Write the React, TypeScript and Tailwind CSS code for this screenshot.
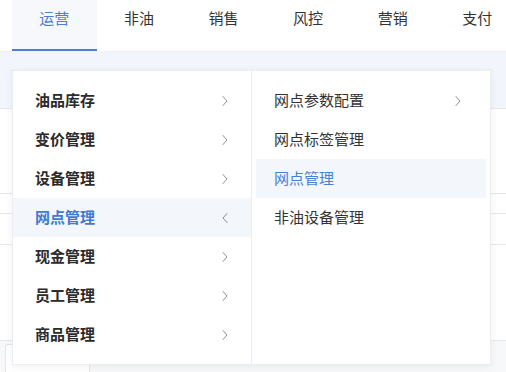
import React from "react";

const tabs = ["运营", "非油", "销售", "风控", "营销", "支付"];

const leftItems = [
  "油品库存",
  "变价管理",
  "设备管理",
  "网点管理",
  "现金管理",
  "员工管理",
  "商品管理",
];

const rightItems = [
  { label: "网点参数配置", arrow: true },
  { label: "网点标签管理", arrow: false },
  { label: "网点管理", arrow: false, active: true },
  { label: "非油设备管理", arrow: false },
];

function Chevron({ left = false }: { left?: boolean }) {
  return (
    <svg width="8" height="12" viewBox="0 0 8 12" fill="none">
      <polyline
        points={left ? "6,1.5 2,6 6,10.5" : "2,1.5 6,6 2,10.5"}
        stroke="#8a8f99"
        strokeWidth="1"
        strokeLinecap="round"
        strokeLinejoin="round"
      />
    </svg>
  );
}

export default function App() {
  return (
    <div
      className="relative h-[372px] w-[506px] overflow-hidden bg-white text-[#333]"
      style={{ fontFamily: '"Noto Sans CJK SC", "Noto Sans", sans-serif' }}
    >
      {/* top nav */}
      <div className="flex h-[52px] border-b border-[#eef1f6] bg-white pl-3">
        {tabs.map((t, i) => (
          <div
            key={t}
            className={
              i === 0
                ? "flex h-full w-[84.6px] shrink-0 items-start justify-center border-b-2 border-[#4a7fd3] bg-[#f6f8fc] pt-[7px] text-[15px] text-[#4a7fd3]"
                : "flex h-full w-[84.6px] shrink-0 items-start justify-center pt-[7px] text-[15px] text-[#333]"
            }
          >
            {t}
          </div>
        ))}
      </div>

      {/* page behind */}
      <div className="h-[56px] bg-[#f2f5fb]" />
      <div className="border-t border-[#e4e7ec] bg-white">
        <div className="h-[84px]" />
        <div className="h-[20px] border-t border-[#e6e8ec]" />
        <div className="h-[31px] border-t border-[#e6e8ec]" />
        <div className="h-[96px] border-t border-[#e6e8ec]" />
        <div className="flex h-[40px] border-t border-[#e6e8ec] bg-[#f7f8fa]">
          <div className="ml-[5px] mt-[3px] h-[40px] w-[85px] rounded-t-[3px] border border-[#e2e4e8] bg-white" />
        </div>
      </div>

      {/* dropdown */}
      <div className="absolute left-[12px] top-[70px] flex h-[295px] w-[479px] border border-[#ebedf0] bg-white shadow-[0_2px_8px_rgba(0,0,0,0.06)]">
        <div className="w-[239px] border-r border-[#ebedf0] py-[10px]">
          {leftItems.map((t, i) => {
            const active = i === 3;
            return (
              <div
                key={t}
                className={
                  active
                    ? "flex h-[39px] items-center justify-between bg-[#f3f6fb] pl-[22px] pr-[22px] text-[15px] font-bold text-[#3f7bd5]"
                    : "flex h-[39px] items-center justify-between pl-[22px] pr-[22px] text-[15px] font-bold text-[#2b2b2b]"
                }
              >
                <span>{t}</span>
                <Chevron left={active} />
              </div>
            );
          })}
        </div>
        <div className="flex-1 px-[4px] py-[10px]">
          {rightItems.map((it) => (
            <div
              key={it.label}
              className={
                it.active
                  ? "flex h-[39px] items-center justify-between bg-[#f3f6fb] pl-[18px] pr-[24px] text-[15px] text-[#4a7fd3]"
                  : "flex h-[39px] items-center justify-between pl-[18px] pr-[24px] text-[15px] text-[#333]"
              }
            >
              <span>{it.label}</span>
              {it.arrow && <Chevron />}
            </div>
          ))}
        </div>
      </div>
    </div>
  );
}
